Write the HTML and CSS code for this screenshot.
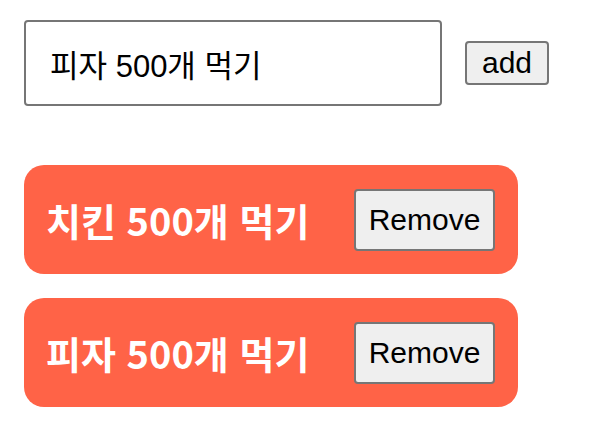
FILE: index.html
```html
<!DOCTYPE html>
<html lang="ko">
<head>
<meta charset="utf-8">
<link rel="stylesheet" href="styles.css">
</head>
<body>
<div class="app">
  <form class="form">
    <input class="field" type="text" value="피자 500개 먹기">
    <button class="btn add" type="button">add</button>
  </form>
  <ul class="list">
    <li class="card"><span class="title">치킨 500개 먹기</span><button class="btn remove" type="button">Remove</button></li>
    <li class="card"><span class="title">피자 500개 먹기</span><button class="btn remove" type="button">Remove</button></li>
  </ul>
</div>
</body>
</html>
```
FILE: styles.css
```css
html, body {
  margin: 0;
  background: #fff;
}
.app {
  padding: 20px 24px;
  font-family: "Liberation Sans", "Noto Sans CJK KR", sans-serif;
}
.form {
  display: flex;
  align-items: center;
  gap: 23px;
  margin: 0;
}
.field {
  box-sizing: border-box;
  width: 418px;
  height: 86px;
  border: 2px solid #767676;
  border-radius: 4px;
  padding: 0 20px 0 24px;
  font-size: 31px;
  font-family: "Liberation Sans", "Noto Sans CJK KR", sans-serif;
  color: #000;
  outline: none;
}
.btn {
  box-sizing: border-box;
  font-family: "Liberation Sans", "Noto Sans CJK KR", sans-serif;
  font-size: 30px;
  color: #000;
  background: #efefef;
  border: 2px solid #767676;
  border-radius: 4px;
  padding: 0;
}
.add {
  width: 84px;
  height: 44px;
}
.list {
  list-style: none;
  margin: 59px 0 0;
  padding: 0;
  display: flex;
  flex-direction: column;
  gap: 24px;
}
.card {
  box-sizing: border-box;
  width: 494px;
  height: 109px;
  background: #ff6347;
  border-radius: 20px;
  padding: 0 23px 0 22px;
  display: flex;
  align-items: center;
  justify-content: space-between;
}
.title {
  color: #fff;
  font-family: "Noto Sans CJK KR", sans-serif;
  font-weight: 700;
  font-size: 38px;
}
.remove {
  width: 141px;
  height: 62px;
}
```
